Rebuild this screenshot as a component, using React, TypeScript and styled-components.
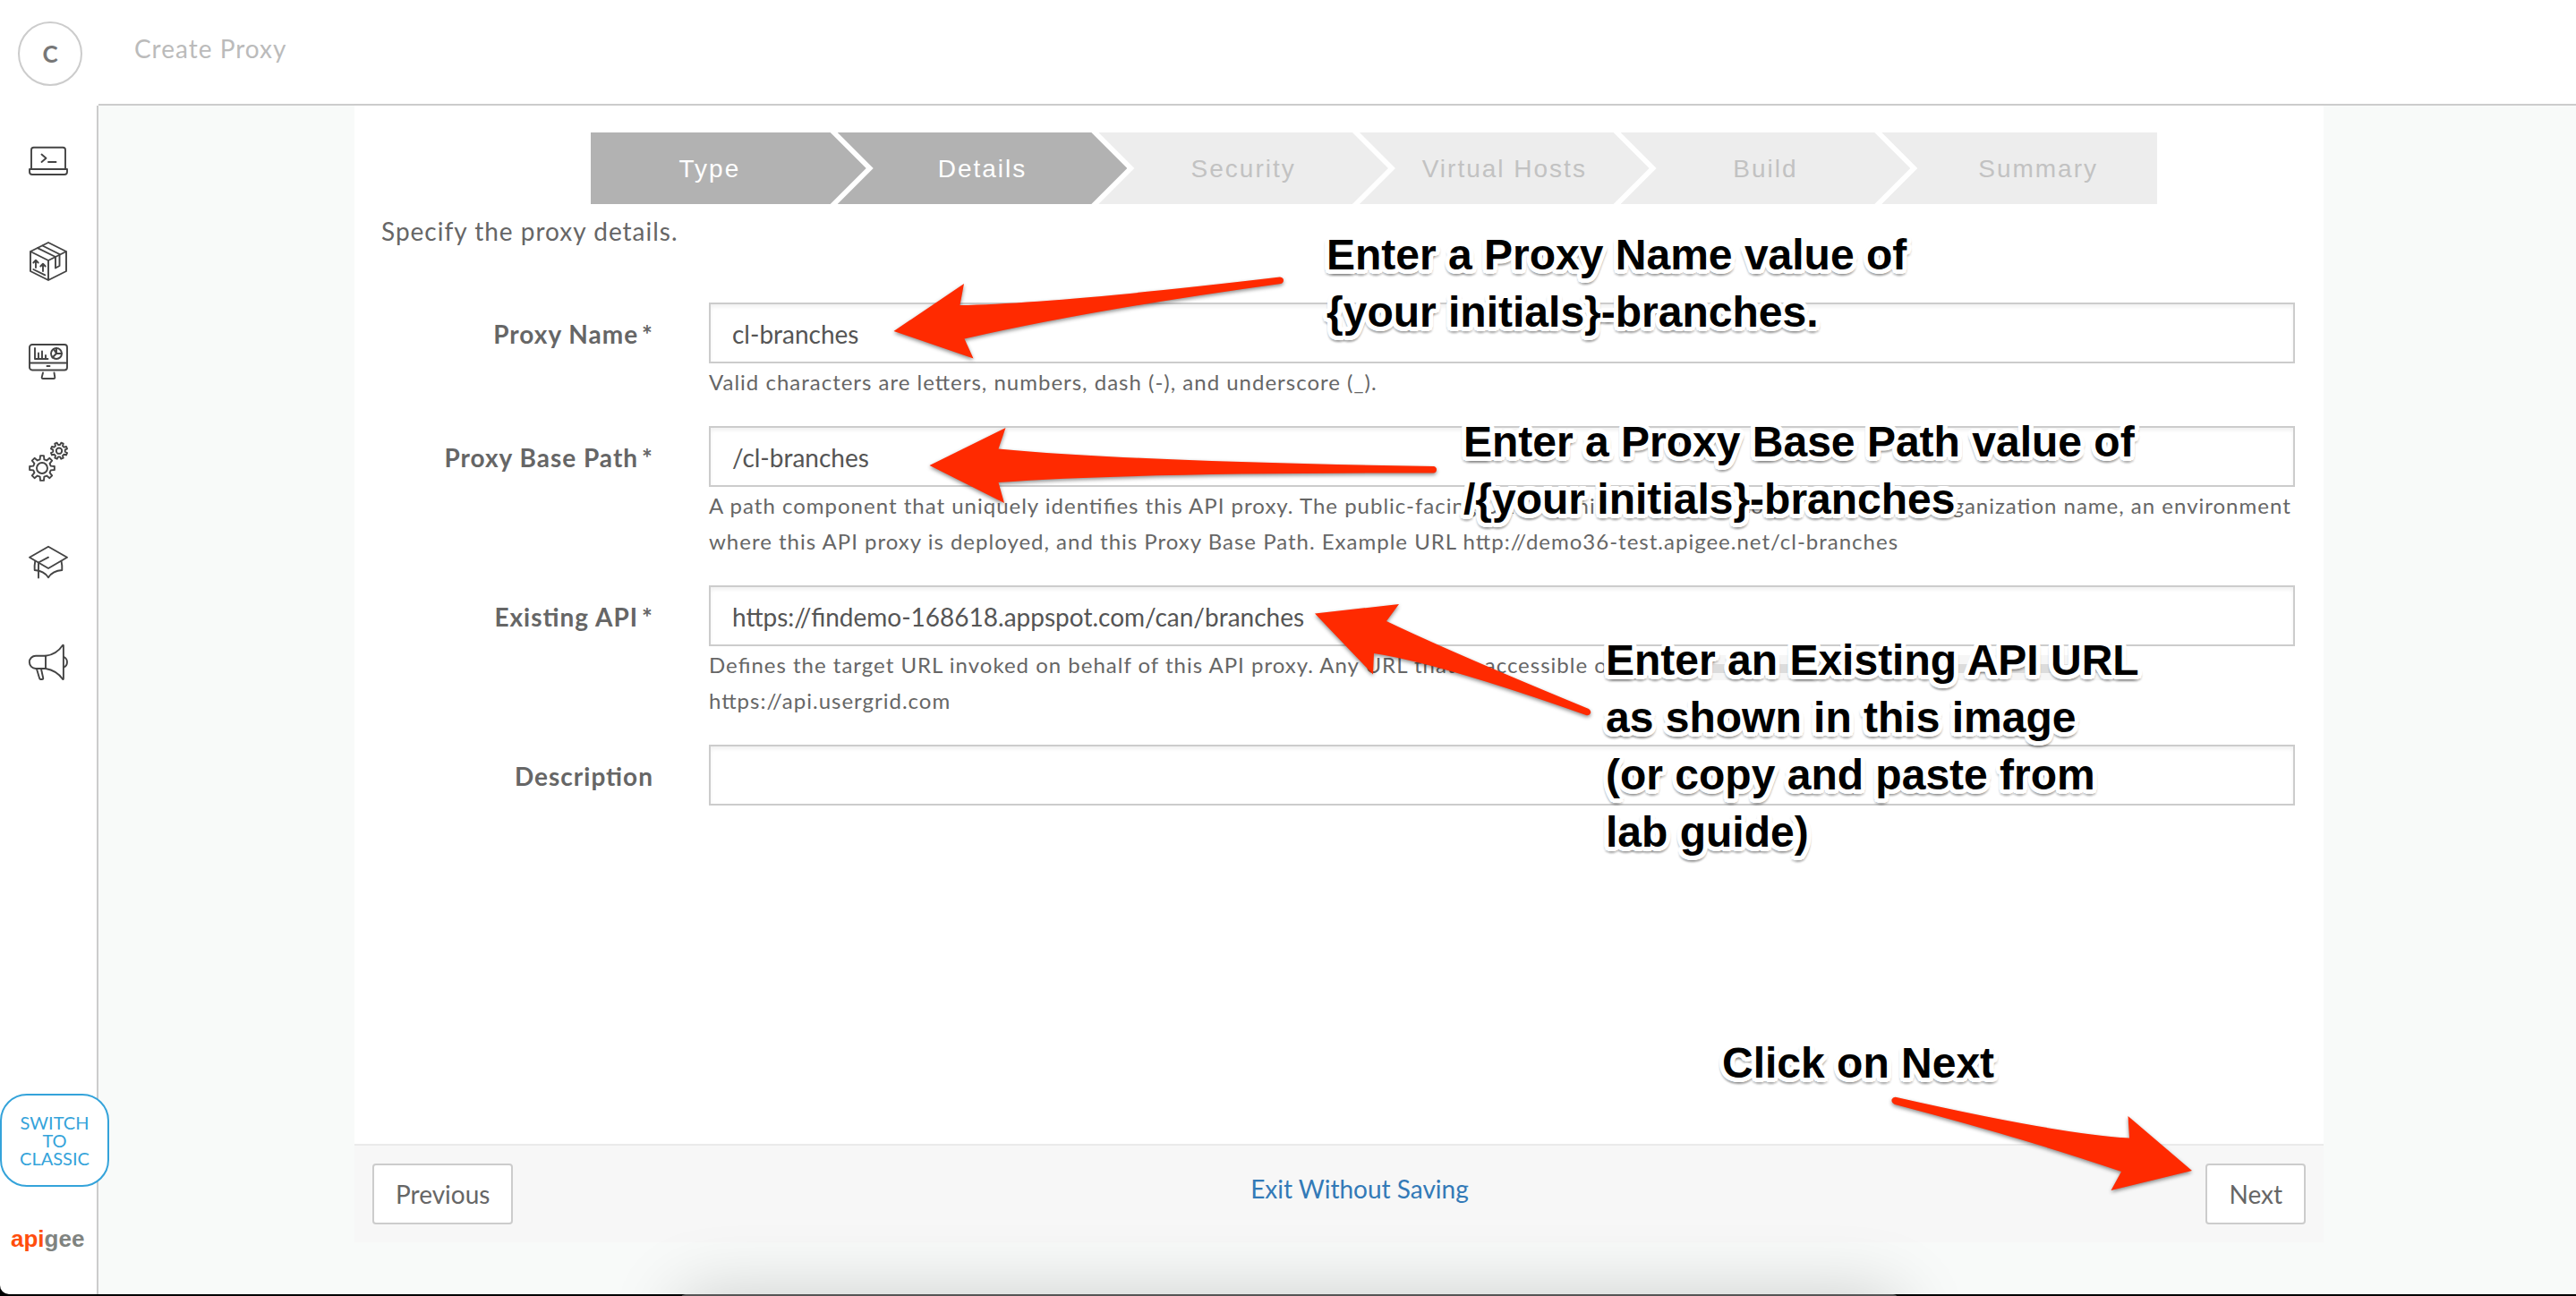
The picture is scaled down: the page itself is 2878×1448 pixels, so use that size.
import React, { useState } from "react";
import styled, { createGlobalStyle, css } from "styled-components";

const GlobalStyle = createGlobalStyle`
  *, *::before, *::after { box-sizing: border-box; }
  body {
    margin: 0;
    background: #000;
    color: #666;
    font-family: Lato, "Open Sans", sans-serif;
    font-size: 28px;
  }
`;

const tracked = css`
  letter-spacing: 1px;
  font-feature-settings: "liga" 1;
`;

const outline = (() => {
  const ring = Array.from({ length: 24 }, (_, i) => {
    const a = (i / 24) * Math.PI * 2;
    return [Math.cos(a) * 5, Math.sin(a) * 5];
  });
  const white = ring.map(([x, y]) => `${x.toFixed(1)}px ${y.toFixed(1)}px 0 #fff`);
  const grey = ring
    .filter((_, i) => i % 2 === 0)
    .map(([x, y]) => `${x.toFixed(1)}px ${(y + 3).toFixed(1)}px 2px rgba(0, 0, 0, 0.12)`);
  return [...white, ...grey].join(", ");
})();

const Page = styled.div`
  position: relative;
  display: flex;
  min-height: calc(100vh - 2px);
  margin-bottom: 2px;
  background: #fff;
  border-radius: 0 0 10px 10px;
`;

const Sidebar = styled.aside`
  display: flex;
  flex: none;
  flex-direction: column;
  width: 108px;
`;

const Avatar = styled.button`
  width: 72px;
  height: 72px;
  margin: 24px 0 28px 20px;
  padding: 0;
  border: 2px solid #ccc;
  border-radius: 50%;
  background: #fff;
  color: #777;
  font: 700 26px/68px Lato, sans-serif;
`;

const Nav = styled.nav`
  display: flex;
  flex: 1;
  flex-direction: column;
`;

const NavLink = styled.a`
  display: flex;
  align-items: center;
  justify-content: center;
  height: 112px;
  color: #444;
`;

const Glyph = styled.svg`
  width: 44px;
  height: 44px;
  overflow: visible;
  fill: none;
  stroke: currentColor;
  stroke-width: 1.9;
  stroke-linecap: round;
  stroke-linejoin: round;
`;

const SideFoot = styled.div`
  position: relative;
  z-index: 1;
  display: flex;
  flex-direction: column;
  gap: 36px;
  padding-bottom: 40px;
`;

const SwitchButton = styled.button`
  width: 122px;
  height: 104px;
  padding: 0 20px;
  border: 2px solid #34a3da;
  border-radius: 30px;
  background: #fff;
  color: #34a3da;
  font: 400 20px/20px Lato, sans-serif;
`;

const Brand = styled.a`
  padding-left: 12px;
  color: #7f8380;
  font: 700 26px/44px "Liberation Sans", sans-serif;
  text-decoration: none;
`;

const BrandAccent = styled.span`
  color: #ff4e0c;
`;

const Workspace = styled.div`
  display: flex;
  flex: 1;
  flex-direction: column;
  min-width: 0;
`;

const TopBar = styled.header`
  height: 118px;
  padding: 34px 0 0 40px;
  border-bottom: 2px solid #ccc;
  margin-left: 2px;
`;

const PageTitle = styled.h1`
  margin: 0;
  color: #bbb;
  font: 400 28px/40px Lato, sans-serif;
  ${tracked}
`;

const Main = styled.main`
  display: flex;
  flex: 1;
  justify-content: center;
  padding: 0 0 58px 4px;
  border-left: 2px solid #ccc;
  background: #f8faf9;
`;

const Panel = styled.form`
  display: flex;
  flex-direction: column;
  width: 80%;
  max-width: 2200px;
  background: #fff;
`;

const PanelBody = styled.div`
  flex: 1;
  padding: 30px 32px 30px 30px;
`;

const Steps = styled.ol`
  display: flex;
  margin: 0 154px 0 234px;
  padding: 0;
  list-style: none;
`;

const Step = styled.li<{ $done?: boolean; $edge?: "first" | "last" }>`
  flex: 1 1 ${(p) => (p.$edge ? 308 : 324)}px;
  height: 80px;
  margin-left: ${(p) => (p.$edge === "first" ? 0 : -32)}px;
  padding: ${(p) =>
    p.$edge === "first" ? "0 42px 0 0" : p.$edge === "last" ? "0 0 0 42px" : "0"};
  background: ${(p) => (p.$done ? "#b2b2b2" : "#ededed")};
  color: ${(p) => (p.$done ? "#fff" : "#c2c2c2")};
  font: 400 28px/82px "Liberation Sans", Arial, sans-serif;
  letter-spacing: 2px;
  text-align: center;
  white-space: nowrap;
  clip-path: ${(p) =>
    p.$edge === "first"
      ? "polygon(0 0, calc(100% - 40px) 0, 100% 50%, calc(100% - 40px) 100%, 0 100%)"
      : p.$edge === "last"
        ? "polygon(0 0, 100% 0, 100% 100%, 0 100%, 40px 50%)"
        : "polygon(0 0, calc(100% - 40px) 0, 100% 50%, calc(100% - 40px) 100%, 0 100%, 40px 50%)"};
`;

const Intro = styled.p`
  margin: 10px 0 60px;
  line-height: 40px;
  ${tracked}
`;

const Row = styled.div`
  display: flex;
  gap: 62px;
  margin-bottom: 29px;
`;

const Label = styled.label`
  flex: none;
  width: 304px;
  font-weight: 700;
  line-height: 70px;
  text-align: right;
  ${tracked}
`;

const Required = styled.span`
  margin-left: 4px;
`;

const Field = styled.div`
  flex: 1;
  min-width: 0;
`;

const TextInput = styled.input`
  display: block;
  width: 100%;
  height: 68px;
  padding: 2px 24px 0;
  border: 2px solid #ccc;
  border-radius: 0;
  outline: none;
  background: #fff;
  box-shadow: inset 0 3px 4px rgba(0, 0, 0, 0.06);
  color: #555;
  font: 400 28px/40px Lato, sans-serif;
`;

const Hint = styled.p`
  margin: 1px 0 0;
  font-size: 24px;
  line-height: 40px;
  white-space: nowrap;
  ${tracked}
`;

const Redaction = styled.span`
  display: inline-block;
  width: 560px;
  height: 28px;
  vertical-align: middle;
  background: linear-gradient(#f6f6f6 0 35%, #dcdcdc 35% 70%, #f6f6f6 70%);
`;

const Actions = styled.footer`
  display: flex;
  justify-content: space-between;
  height: 110px;
  padding: 20px;
  border-top: 2px solid #eaeaea;
  background: #f7f7f7;
`;

const Button = styled.button`
  height: 68px;
  padding: 0 24px;
  border: 2px solid #ccc;
  border-radius: 4px;
  background: #fff;
  color: #666;
  font: 400 28px/40px Lato, sans-serif;
`;

const ExitLink = styled.a`
  color: #337ab7;
  line-height: 56px;
  text-decoration: none;
`;

const Callouts = styled.div`
  position: absolute;
  inset: 0;
  overflow: hidden;
  border-radius: 0 0 10px 10px;
  pointer-events: none;
`;

const Arrows = styled.svg`
  position: absolute;
  top: 0;
  left: 0;
  width: 2878px;
  height: 1446px;
  fill: #ff2a00;
  filter: drop-shadow(0 2px 2px rgba(0, 0, 0, 0.45));
`;

const Note = styled.p<{ $x: number; $y: number }>`
  position: absolute;
  left: ${(p) => p.$x}px;
  top: ${(p) => p.$y}px;
  margin: 0;
  color: #000;
  font: 700 48px/64px "Liberation Sans", Arial, sans-serif;
  text-shadow: ${outline};
  white-space: pre-line;
`;

const Dock = styled.div`
  position: absolute;
  bottom: -2px;
  left: 0;
  right: 0;
  height: 120px;
  overflow: hidden;
  pointer-events: none;

  &::after {
    content: "";
    position: absolute;
    top: 118px;
    left: 760px;
    right: 757px;
    height: 200px;
    border-radius: 6px;
    background: #555;
    box-shadow: 0 0 80px rgba(0, 0, 0, 0.18);
  }
`;

const gear = (cx: number, cy: number, outer: number, root: number, turn: number) => {
  const pts: string[] = [];
  for (let i = 0; i < 8; i++) {
    const mid = turn + (i * Math.PI) / 4;
    const spots: [number, number][] = [
      [root, -0.24],
      [outer, -0.14],
      [outer, 0.14],
      [root, 0.24],
    ];
    for (const [r, d] of spots) {
      pts.push(`${(cx + Math.cos(mid + d) * r).toFixed(2)} ${(cy + Math.sin(mid + d) * r).toFixed(2)}`);
    }
  }
  return `M${pts.join("L")}Z`;
};

const navItems = [
  {
    label: "Develop",
    icon: (
      <>
        <path d="M3 30V9.500Q3 6.800 5.700 6.800H38.300Q41 6.800 41 9.500V30" />
        <path d="M1 31H43V34Q43 37 40 37H4Q1 37 1 34Z" />
        <path d="M14.500 14.500L19.500 18.700L14.500 23M22 23H30.500" />
      </>
    ),
  },
  {
    label: "Publish",
    icon: (
      <>
        <path d="M22 1L42 11V33L22 43L2 33V11ZM2 11L22 21L42 11M22 21V43" />
        <path d="M15.500 4.500L34.500 14V27L30 29.500V17L10 7.200" />
        <path d="M8 29V21M5.300 23.500L8 20.700L10.700 23.500M16 33V25M13.300 27.500L16 24.700L18.700 27.500M5.300 31L18.300 37.300" />
      </>
    ),
  },
  {
    label: "Analyze",
    icon: (
      <>
        <rect x="1" y="3" width="42" height="28.500" rx="3" />
        <path d="M1 23.500H43M20.500 27H23.500M16 34.500L14.700 39.500Q14.500 41 16 41H28Q29.500 41 29.300 39.500L28.500 34.500" />
        <path d="M7 7V19H21.500M11 18V12.500M15 18V10.500M19 18V15" />
        <circle cx="31" cy="13" r="6" />
        <path d="M31 13V7M31 13H37M31 13L26.500 17.500M31 13L28 8" />
      </>
    ),
  },
  {
    label: "Admin",
    icon: (
      <>
        <path d={gear(15, 29, 14, 10, 0)} />
        <circle cx="15" cy="29" r="6" />
        <path d={gear(34, 9.7, 9.3, 6.8, Math.PI / 8)} />
        <circle cx="34" cy="9.700" r="3.200" />
      </>
    ),
  },
  {
    label: "Learn",
    icon: (
      <>
        <path d="M22 4.700L43 16.700L22 29L1 16.700Z" />
        <path d="M22 16.700L11 22.500V39.500" />
        <path d="M7.200 21.500Q6.300 26 6.700 31Q17 31.500 22 39.200Q27 31.500 37.300 31Q37.700 26 36.500 21" />
      </>
    ),
  },
  {
    label: "News",
    icon: (
      <>
        <path d="M19 14.700H8A7.150 7.150 0 0 0 8 29H19Z" />
        <path d="M19 14.700Q31 13.500 38 3Q38.900 2.300 38.900 3.500V40Q38.900 41.500 38 40.700Q31 31 19 29" />
        <path d="M39.500 16A6.500 6.500 0 0 1 39.500 27.500M9 29.500L12 39.500Q12.300 41 13.500 41H15Q16.500 41 16.200 39.500L14 29.500" />
      </>
    ),
  },
];

const steps = ["Type", "Details", "Security", "Virtual Hosts", "Build", "Summary"];

const notes = [
  { x: 1482, y: 253, text: "Enter a Proxy Name value of\n{your initials}-branches." },
  { x: 1635, y: 462, text: "Enter a Proxy Base Path value of\n/{your initials}-branches" },
  { x: 1794, y: 706, text: "Enter an Existing API URL\nas shown in this image\n(or copy and paste from\nlab guide)" },
  { x: 1924, y: 1156, text: "Click on Next" },
];

const arrows = [
  "M998.500 370L1077 317L1072.500 341Q1180 339 1430 309.500Q1434 310 1434 313Q1434 316 1431 317Q1220 346 1077.500 378.500L1087.500 400.500Z",
  "M1038.500 520L1123.500 478L1115.500 501.500Q1270 516 1602 521Q1605 522 1605 524.500Q1605 528 1602 528.500Q1270 528 1115.500 539L1122 562Z",
  "M1469 685.500L1563 675L1549 694Q1622 729 1775 792Q1778 794 1777 797Q1775 800 1772 799Q1608 741 1535 730L1534 753.500Z",
  "M2449 1308L2377.500 1247L2379 1271.500Q2300 1267 2119 1226Q2115 1225 2113.500 1228.500Q2113 1232 2117 1234Q2262 1272 2370 1309L2358.500 1330Z",
];

export default function App() {
  const [name, setName] = useState("cl-branches");
  const [basePath, setBasePath] = useState("/cl-branches");
  const [target, setTarget] = useState("https://findemo-168618.appspot.com/can/branches");
  const [description, setDescription] = useState("");

  return (
    <>
      <GlobalStyle />
      <Page>
        <Sidebar>
          <Avatar type="button">C</Avatar>
          <Nav aria-label="Main">
            {navItems.map((item) => (
              <NavLink key={item.label} href="#" aria-label={item.label}>
                <Glyph viewBox="0 0 44 44" aria-hidden="true">
                  {item.icon}
                </Glyph>
              </NavLink>
            ))}
          </Nav>
          <SideFoot>
            <SwitchButton type="button">SWITCH TO CLASSIC</SwitchButton>
            <Brand href="#">
              <BrandAccent>api</BrandAccent>gee
            </Brand>
          </SideFoot>
        </Sidebar>
        <Workspace>
          <TopBar>
            <PageTitle>Create Proxy</PageTitle>
          </TopBar>
          <Main>
            <Panel onSubmit={(e) => e.preventDefault()}>
              <PanelBody>
                <Steps>
                  {steps.map((step, i) => (
                    <Step
                      key={step}
                      $done={i < 2}
                      $edge={i === 0 ? "first" : i === steps.length - 1 ? "last" : undefined}
                    >
                      {step}
                    </Step>
                  ))}
                </Steps>
                <Intro>Specify the proxy details.</Intro>
                <Row>
                  <Label htmlFor="name">
                    Proxy Name<Required>*</Required>
                  </Label>
                  <Field>
                    <TextInput id="name" value={name} onChange={(e) => setName(e.target.value)} />
                    <Hint>Valid characters are letters, numbers, dash (-), and underscore (_).</Hint>
                  </Field>
                </Row>
                <Row>
                  <Label htmlFor="path">
                    Proxy Base Path<Required>*</Required>
                  </Label>
                  <Field>
                    <TextInput id="path" value={basePath} onChange={(e) => setBasePath(e.target.value)} />
                    <Hint>
                      A path component that uniquely identifies this API proxy. The public-facing URL for this API
                      proxy is comprised of your organization name, an environment
                      <br />
                      where this API proxy is deployed, and this Proxy Base Path. Example URL
                      http://demo36-test.apigee.net/cl-branches
                    </Hint>
                  </Field>
                </Row>
                <Row>
                  <Label htmlFor="target">
                    Existing API<Required>*</Required>
                  </Label>
                  <Field>
                    <TextInput id="target" value={target} onChange={(e) => setTarget(e.target.value)} />
                    <Hint>
                      Defines the target URL invoked on behalf of this API proxy. Any URL that is accessible o
                      <Redaction />
                      <br />
                      https://api.usergrid.com
                    </Hint>
                  </Field>
                </Row>
                <Row>
                  <Label htmlFor="description">Description</Label>
                  <Field>
                    <TextInput
                      id="description"
                      value={description}
                      onChange={(e) => setDescription(e.target.value)}
                    />
                  </Field>
                </Row>
              </PanelBody>
              <Actions>
                <Button type="button">Previous</Button>
                <ExitLink href="#">Exit Without Saving</ExitLink>
                <Button type="submit">Next</Button>
              </Actions>
            </Panel>
          </Main>
        </Workspace>
        <Callouts>
          <Arrows viewBox="0 0 2878 1446" aria-hidden="true">
            {arrows.map((d) => (
              <path key={d} d={d} />
            ))}
          </Arrows>
          {notes.map((note) => (
            <Note key={note.text} $x={note.x} $y={note.y}>
              {note.text}
            </Note>
          ))}
        </Callouts>
        <Dock />
      </Page>
    </>
  );
}
